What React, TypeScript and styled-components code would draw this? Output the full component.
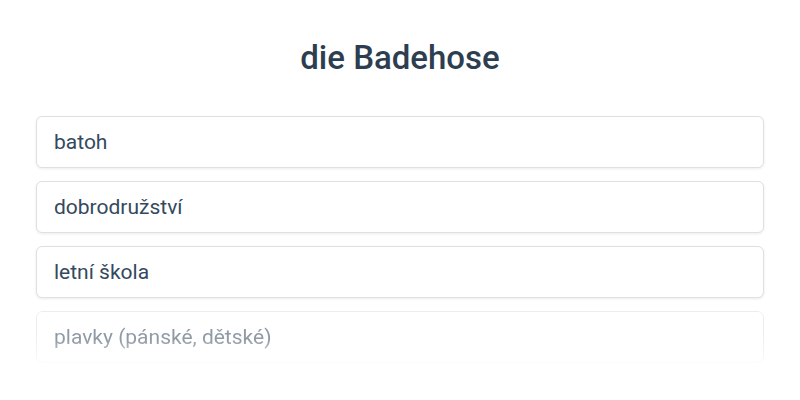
import React from "react";
import styled, { createGlobalStyle } from "styled-components";

const GlobalStyle = createGlobalStyle`
  html, body {
    margin: 0;
    padding: 0;
    background: #ffffff;
    font-family: Roboto, "Noto Sans", sans-serif;
  }
`;

const Page = styled.div`
  width: 800px;
  height: 400px;
  box-sizing: border-box;
  padding: 36px 36px 0;
  display: flex;
  flex-direction: column;
  overflow: hidden;
`;

const Title = styled.h1`
  margin: 0 0 36px;
  text-align: center;
  font-size: 33px;
  line-height: 44px;
  font-weight: 500;
  color: #2c3e50;
`;

const List = styled.div`
  display: flex;
  flex-direction: column;
  gap: 13px;
`;

const Card = styled.div<{ faded?: boolean }>`
  height: 52px;
  box-sizing: border-box;
  padding: 0 17px;
  display: flex;
  align-items: center;
  background: #ffffff;
  border: 1px solid #e0e0e0;
  border-radius: 6px;
  box-shadow: 0 1px 3px rgba(0, 0, 0, 0.08);
  font-size: 21px;
  color: #34495e;
  opacity: ${({ faded }) => (faded ? 0.55 : 1)};
  ${({ faded }) =>
    faded &&
    `
    -webkit-mask-image: linear-gradient(to bottom, #000 55%, rgba(0,0,0,0.25) 100%);
    mask-image: linear-gradient(to bottom, #000 55%, rgba(0,0,0,0.25) 100%);
  `}
`;

const words = ["batoh", "dobrodružství", "letní škola", "plavky (pánské, dětské)"];

export default function App(): React.JSX.Element {
  return (
    <>
      <GlobalStyle />
      <Page>
        <Title>die Badehose</Title>
        <List>
          {words.map((w, i) => (
            <Card key={w} faded={i === words.length - 1}>
              {w}
            </Card>
          ))}
        </List>
      </Page>
    </>
  );
}
